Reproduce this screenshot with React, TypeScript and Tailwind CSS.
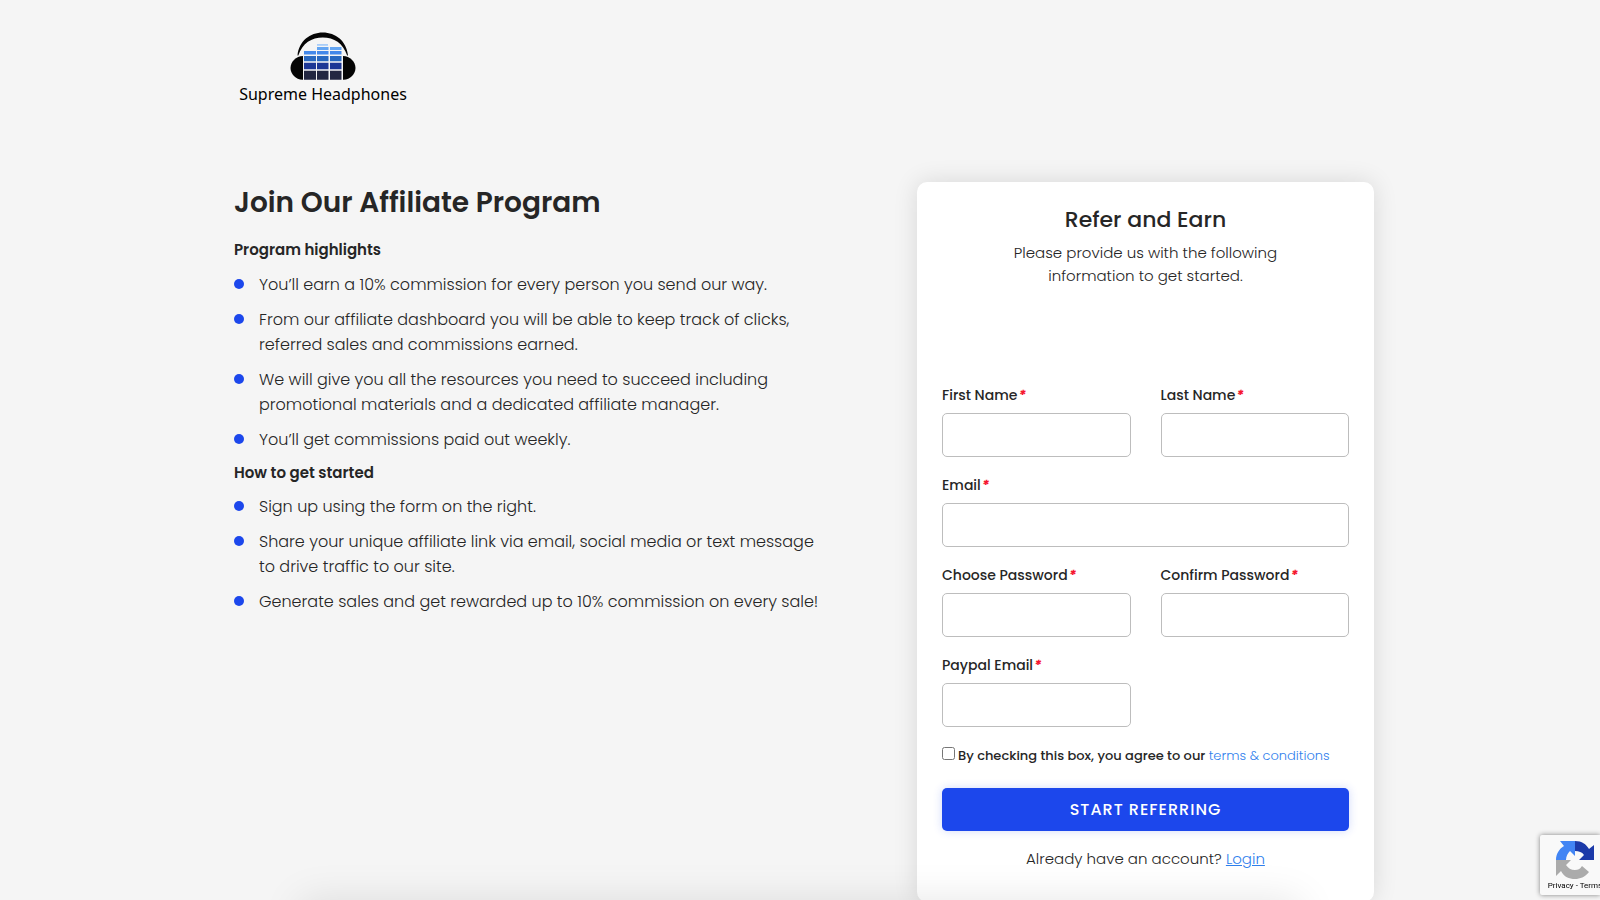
import { ReactElement } from "react";

const highlights: string[] = [
  "You’ll earn a 10% commission for every person you send our way.",
  "From our affiliate dashboard you will be able to keep track of clicks, referred sales and commissions earned.",
  "We will give you all the resources you need to succeed including promotional materials and a dedicated affiliate manager.",
  "You’ll get commissions paid out weekly.",
];

const steps: string[] = [
  "Sign up using the form on the right.",
  "Share your unique affiliate link via email, social media or text message to drive traffic to our site.",
  "Generate sales and get rewarded up to 10% commission on every sale!",
];

interface FieldProps {
  id: string;
  label: string;
  type?: string;
  wide?: boolean;
}

const fields: FieldProps[] = [
  { id: "first-name", label: "First Name" },
  { id: "last-name", label: "Last Name" },
  { id: "email", label: "Email", type: "email", wide: true },
  { id: "password", label: "Choose Password", type: "password" },
  { id: "confirm-password", label: "Confirm Password", type: "password" },
  { id: "paypal-email", label: "Paypal Email", type: "email" },
];

function Field({ id, label, type = "text", wide = false }: FieldProps): ReactElement {
  return (
    <div className={wide ? "col-span-2" : ""}>
      <label htmlFor={id} className="block mb-2 text-sm leading-5 font-medium">
        {label}
        <span className="ml-px font-bold italic text-[#f5132d]">*</span>
      </label>
      <input
        id={id}
        name={id}
        type={type}
        required
        className="block w-full h-11 px-3 rounded-[5px] border border-[#bdbdbd] bg-white outline-none focus:border-[#1c47ec]"
      />
    </div>
  );
}

function BulletList({ items }: { items: string[] }): ReactElement {
  return (
    <ul className="flex flex-col gap-2.5">
      {items.map((item) => (
        <li key={item} className="flex items-start gap-[15px] text-base leading-[25px] font-light">
          <span className="mt-[7px] size-2.5 shrink-0 rounded-full bg-[#1c47ec]" />
          <span>{item}</span>
        </li>
      ))}
    </ul>
  );
}

function Logo(): ReactElement {
  return (
    <a href="#" className="flex flex-col items-center w-[178px] text-black">
      <svg viewBox="0 0 66 50" className="w-[66px] h-[50px]" aria-hidden="true">
        <path d="M7.500 23.500C9 9 20 .5 32.800.5S56.500 9 58 23.500h-.8C53 11 44 5.500 32.800 5.500S12.500 11 8.300 23.500Z" fill="#050505" />
        <path d="M13 24v23.700C6 48 .5 42 .5 36S6 24 13 24Z" fill="#050505" />
        <path d="M53 24v23.700C60 48 65.500 42 65.500 36S60 24 53 24Z" fill="#050505" />
        <path d="M27 12h11v1.800H27z" fill="#a9cdf8" />
        <path d="M27 15h11.500v3H27zM40 15h11.500v3H40z" fill="#64a5f2" />
        <path d="M14 19h12v3.500H14zM27 19h11.500v3.500H27zM40 19h11.500v3.500H40z" fill="#4388ea" />
        <path d="M14 24h12v5.300H14zM27 24h11.500v5.300H27zM40 24h11.500v5.300H40z" fill="#2868c0" />
        <path d="M14 30.700h12v6.600H14zM27 30.700h11.500v6.600H27zM40 30.700h11.500v6.600H40z" fill="#1d3796" />
        <path d="M14 38.700h12v9H14zM27 38.700h11.500v9H27zM40 38.700h11.500v9H40z" fill="#232741" />
      </svg>
      <span className="font-['Noto_Sans'] text-base leading-6 whitespace-nowrap">Supreme Headphones</span>
    </a>
  );
}

function RecaptchaBadge(): ReactElement {
  return (
    <div className="fixed right-0 bottom-[5px] w-[60px] h-[60px] overflow-hidden rounded-l-xs bg-[#f9f9f9] shadow-[0_0_5px_gray]">
      <div className="flex flex-col items-center w-[70px] pt-1.5">
        <svg viewBox="0 0 38 38" className="size-[38px]" aria-hidden="true">
          <path d="M19 0C26 0 30 3 33 8l5-4v15H23l5-5c-2-3-5-4-9-4Z" fill="#1c3aa9" />
          <path d="M0 19C0 13 3 8 8 5L4 0h15v15l-5-5c-2 2-4 5-4 9Z" fill="#4285f4" />
          <path d="M0 19h15l-5 5c2 3 5 5 9 5 3 0 5-1 7-4l7 6c-4 5-9 7-14 7-6 0-11-2-14-8l-5 5Z" fill="#ababab" />
        </svg>
        <span className="mt-px font-['Roboto',sans-serif] text-[8px] leading-3 whitespace-nowrap text-black">Privacy - Terms</span>
      </div>
    </div>
  );
}

export default function App(): ReactElement {
  return (
    <div className="min-h-screen overflow-hidden bg-[#f5f5f5] text-[#262626] font-['Poppins','Inter',sans-serif]">
      <div className="mx-auto max-w-[1148px] pl-2">
        <header className="pt-8">
          <Logo />
        </header>

        <main className="grid grid-cols-[1fr_457px] items-start mt-19">
          <section className="max-w-[600px]">
            <h1 className="text-[28px] leading-[42px] font-semibold">Join Our Affiliate Program</h1>
            <h2 className="mt-[13px] mb-2.5 text-[15px] leading-[25px] font-semibold">Program highlights</h2>
            <BulletList items={highlights} />
            <h2 className="mt-2 mb-[9px] text-[15px] leading-[25px] font-semibold">How to get started</h2>
            <BulletList items={steps} />
          </section>

          <section className="rounded-[10px] bg-white px-[25px] pt-5 pb-8 shadow-[0_0_25px_rgba(0,0,0,0.12)]">
            <h2 className="text-center text-[22px] leading-9 font-medium">Refer and Earn</h2>
            <p className="mx-auto mt-[3px] max-w-[300px] text-center text-[15px] leading-[23px] font-light">
              Please provide us with the following information to get started.
            </p>
            <form className="mt-[98px]" onSubmit={(e) => e.preventDefault()}>
              <div className="grid grid-cols-2 gap-x-[30px] gap-y-[18px]">
                {fields.map((field) => (
                  <Field key={field.id} {...field} />
                ))}
              </div>
              <div className="flex items-start gap-[3px] mt-[19px] text-[13px] leading-5">
                <input id="agree" type="checkbox" className="mt-px size-[13px]" />
                <label htmlFor="agree" className="font-medium">
                  By checking this box, you agree to our{" "}
                  <a href="#" className="font-light text-[#2f80ed]">terms &amp; conditions</a>
                </label>
              </div>
              <button
                type="submit"
                className="block w-full h-[43px] mt-[22px] rounded-[5px] bg-[#1c47ec] text-base font-medium tracking-[1px] text-white shadow-[0_0_10px_rgba(28,71,236,0.2)] cursor-pointer"
              >
                START REFERRING
              </button>
            </form>
            <p className="mt-4 text-center text-[15px] leading-[23px] font-light">
              Already have an account? <a href="#" className="text-[#2f80ed] underline">Login</a>
            </p>
          </section>
        </main>
      </div>

      {/* collapsed popup, only its shadow reaches into view */}
      <div className="fixed top-full inset-x-[300px] h-20 shadow-[0_0_40px_rgba(0,0,0,0.1)]" />

      <RecaptchaBadge />
    </div>
  );
}
